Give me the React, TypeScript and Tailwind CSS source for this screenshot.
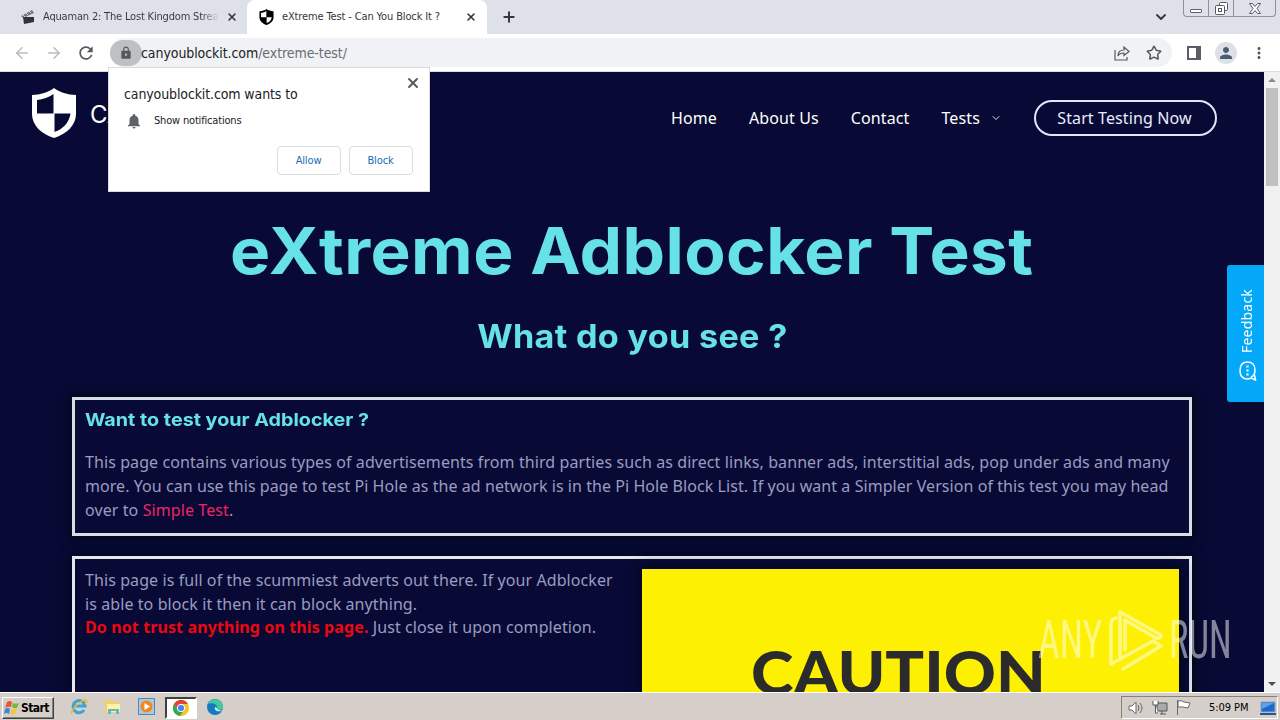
import React from 'react';
import { ArrowLeft, ArrowRight, ChevronDown, Plus, X, Star } from 'lucide-react';
import { MdLock, MdNotifications, MdPerson, MdRefresh, MdMoreVert } from 'react-icons/md';

const navItems = ['Home', 'About Us', 'Contact'];

function ShieldIcon({ className }: { className: string }) {
  return (
    <svg viewBox="0 0 44 50" className={className} fill="currentColor">
      <path
        fillRule="evenodd"
        d="M22 0C17 4 8 7 0 7v19c0 11 9 20 22 24 13-4 22-13 22-24V7C36 7 27 4 22 0ZM21.500 6v19.500H5V12c6-.5 12-3 16.500-6ZM22.500 25.500H38.500C37 35 31 41 22.500 44Z"
      />
    </svg>
  );
}

function TabStrip() {
  return (
    <div className="flex h-[34px] shrink-0 items-stretch bg-[#dee1e9] text-[11px] text-[#34373d]">
      <div className="flex w-[247px] items-center">
        <svg viewBox="0 0 14 14" className="ml-[21px] h-3.5 w-3.5">
          <path d="M0 6 11 0l2 3L2 8Z" fill="#73767a" />
          <path d="M2 7h11v5L3 14Z" fill="#303236" />
          <path d="m2 5 2 2m1-4 2 2m1-4 2 2" stroke="#ddd" />
        </svg>
        <span className="ml-2 w-[176px] overflow-hidden whitespace-nowrap bg-linear-to-r from-[#34373d] from-90% to-transparent bg-clip-text tracking-[-0.18px] text-transparent">
          Aquaman 2: The Lost Kingdom Strea
        </span>
        <X className="ml-[7px] h-3 w-3" strokeWidth={3.2} />
      </div>
      <div className="flex w-[240px] items-center rounded-t-lg bg-white">
        <ShieldIcon className="ml-3 h-4 w-[15px] text-black" />
        <span className="ml-2 w-[180px] whitespace-nowrap tracking-[-0.13px]">eXtreme Test - Can You Block It ?</span>
        <X className="ml-[3px] h-3 w-3" strokeWidth={3.2} />
      </div>
      <Plus className="ml-3.5 h-4 w-4 self-center" strokeWidth={3} />
      <ChevronDown className="ml-auto mr-[14px] h-4 w-4 self-center" strokeWidth={2.800} />
      <div className="mr-1 flex h-[17px] rounded-b-[4px] border border-t-0 border-[#8c929d]">
        <div className="flex w-[25px] items-end justify-center border-r border-[#8c929d] pb-[3px]">
          <div className="h-1 w-3 rounded-[1px] border border-[#5d626b] bg-white" />
        </div>
        <div className="flex w-[25px] items-center justify-center border-r border-[#8c929d]">
          <svg viewBox="0 0 13 13" className="h-[13px] w-[13px]" fill="white" stroke="#555a63">
            <rect x="4.500" y=".5" width="8" height="8" rx="1" />
            <rect x=".5" y="3.500" width="9" height="9" rx="1" />
            <rect x="3.500" y="6.500" width="3" height="3" />
          </svg>
        </div>
        <div className="flex w-[41px] items-center justify-center">
          <svg viewBox="0 0 12 11" className="h-[11px] w-3" fill="white" stroke="#555a63">
            <path d="M.5.5h3L6 3.500 8.500.5h3L8 5.500l3.500 5h-3L6 7.500l-2.500 3h-3L4 5.500Z" />
          </svg>
        </div>
      </div>
    </div>
  );
}

function Toolbar() {
  return (
    <div className="flex h-[38px] shrink-0 items-center border-b border-[#dcdfe2] bg-white text-[#55595d]">
      <ArrowLeft className="ml-[13px] h-[18px] w-[18px] text-[#b9bbbd]" strokeWidth={2} />
      <ArrowRight className="ml-[14px] h-[18px] w-[18px] text-[#b9bbbd]" strokeWidth={2} />
      <MdRefresh className="ml-[13px] h-5 w-5" />
      <div className="ml-[14px] flex h-[29px] w-[1062px] items-center rounded-full bg-[#f0f2f5]">
        <div className="flex h-[26px] w-8 items-center justify-center rounded-full bg-[#bec1c1]">
          <MdLock className="h-3.5 w-3.5" />
        </div>
        <span className="-ml-px mt-px whitespace-nowrap text-[14px] tracking-[-0.08px] text-[#202124]">
          canyoublockit.com<span className="text-[#696d72]">/extreme-test/</span>
        </span>
        <svg viewBox="0 0 16 16" className="ml-auto h-4 w-4" fill="none" stroke="currentColor" strokeWidth="1.200">
          <path d="M1 5v10h12v-3M4 11c0-4 2-6 6-6V2l5 4.500-5 4V8C7 8 5 9 4 11Z" />
        </svg>
        <Star className="ml-4 mr-2.5 h-4 w-4" strokeWidth={2.300} />
      </div>
      <div className="ml-[15px] h-[14px] w-[14px] border-2 border-r-[5px] border-[#5a5d61]" />
      <div className="ml-[14px] flex h-[22px] w-[22px] items-center justify-center rounded-full bg-[#dde1e7]">
        <MdPerson className="h-[18px] w-[18px] text-[#4c5a72]" />
      </div>
      <MdMoreVert className="ml-[13px] h-[18px] w-[18px]" />
    </div>
  );
}

function PermissionPrompt() {
  return (
    <div className="absolute left-[108px] top-[67px] z-20 flex h-[125px] w-[322px] flex-col border border-[#d8dadd] bg-white text-[11px] text-[#202124]">
      <div className="flex justify-between pl-[15px] pr-2 pt-[7px]">
        <span className="mt-[9px] whitespace-nowrap text-[14px] leading-5 tracking-[-0.12px]">canyoublockit.com wants to</span>
        <X className="h-4 w-4 text-[#55595d]" strokeWidth={2.800} />
      </div>
      <div className="mt-[7px] flex h-5 items-center pl-4">
        <MdNotifications className="h-[18px] w-[18px] text-[#5f6368]" />
        <span className="ml-[11px] tracking-[-0.18px]">Show notifications</span>
      </div>
      <div className="mr-4 mt-[15px] flex justify-end gap-2 tracking-[-0.15px] text-[#1a6bb8]">
        <button className="h-[29px] w-16 rounded-[4px] border border-[#dadce0] pr-px pt-0.5">Allow</button>
        <button className="h-[29px] w-16 rounded-[4px] border border-[#dadce0] pr-px pt-0.5">Block</button>
      </div>
    </div>
  );
}

function SiteHeader() {
  return (
    <header className="flex h-[92px] items-center text-[16px] text-white">
      <ShieldIcon className="-mt-2.5 ml-8 h-[50px] w-11" />
      <span className="-mt-1.5 ml-[14px] w-[520px] font-['Inter'] text-[24px] leading-8">CA</span>
      <nav className="ml-[61px] flex items-center gap-8 whitespace-nowrap tracking-[0.11px]">
        {navItems.map((item) => (
          <a key={item}>{item}</a>
        ))}
        <a className="flex items-center">
          Tests <ChevronDown className="ml-2.5 h-3 w-3" strokeWidth={1.700} />
        </a>
        <a className="flex h-9 w-[183px] items-center justify-center rounded-full border-2 border-[#e3e5fa] pr-0.5 text-[#e9ebff]">
          Start Testing Now
        </a>
      </nav>
    </header>
  );
}

function PageBody() {
  return (
    <main className="font-['Noto_Sans',sans-serif]">
      <h1 className="mt-[47px] text-center font-['Inter'] text-[64px] font-bold leading-[80px] text-[#66e1e7]">
        <span className="inline-block scale-x-[1.055] whitespace-nowrap tracking-[0.4px]">eXtreme Adblocker Test</span>
      </h1>
      <h2 className="mt-[26px] text-center font-['Inter'] text-[32px] font-bold leading-10 text-[#66e1e7]">
        <span className="inline-block scale-x-[1.067] whitespace-nowrap tracking-[0.3px]">What do you see ?</span>
      </h2>
      <section className="mx-[72px] mt-10 h-[139px] border-[3px] border-[#d9dce3] px-2.5 pt-[7px] shadow-[0_0_10px_3px_#02091f]">
        <h3 className="font-['Inter'] text-[18px] font-bold leading-[26px] text-[#66e1e7]">
          <span className="inline-block origin-left scale-x-[1.097] whitespace-nowrap">Want to test your Adblocker ?</span>
        </h3>
        <p className="mt-[17px] whitespace-nowrap text-[16px] leading-6 tracking-[0.09px] text-[#9a9cc0]">
          This page contains various types of advertisements from third parties such as direct links, banner ads, interstitial ads, pop under ads and many
          <br />
          <span className="tracking-[0.06px]">
            more. You can use this page to test Pi Hole as the ad network is in the Pi Hole Block List. If you want a Simpler Version of this test you may head
          </span>
          <br />
          over to <a className="text-[#ed2465]">Simple Test</a>.
        </p>
      </section>
      <section className="mx-[72px] mt-5 flex h-[420px] border-[3px] border-[#e5e7ec] pl-2.5 pt-2.5 shadow-[0_0_10px_3px_#02091f]">
        <p className="w-[557px] whitespace-nowrap text-[16px] leading-[23.700px] tracking-[0.085px] text-[#9a9cc0]">
          This page is full of the scummiest adverts out there. If your Adblocker
          <br />
          is able to block it then it can block anything.
          <br />
          <strong className="tracking-[0.11px] text-[#ed0711]">Do not trust anything on this page.</strong> Just close it upon completion.
        </p>
        <div className="h-[400px] w-[537px] bg-[#fdf002] pl-[109px] pt-[71px] shadow-[0_0_10px_3px_#020920]">
          <span className="inline-block origin-left scale-x-[1.055] whitespace-nowrap font-['Lato'] text-[61px] font-black leading-[64px] text-[#2b2b2b]">
            CAUTION
          </span>
        </div>
      </section>
    </main>
  );
}

function FeedbackTab() {
  return (
    <div className="absolute right-4 top-[265px] flex h-[137px] w-[37px] flex-col items-center justify-end gap-2 rounded-l-[3px] bg-[#03a9f8] pb-[21px] text-white">
      <span className="ml-0.5 rotate-180 font-['Noto_Sans'] text-[14px] leading-5 tracking-[0.2px] [writing-mode:vertical-rl]">Feedback</span>
      <svg viewBox="0 0 18 20" className="ml-1 h-5 w-[18px]" fill="none" stroke="white" strokeWidth="1.500">
        <path d="M12 16c3-1 4-4 4-7 0-5-3-8-7.500-8S1 4 1 9.500 4 18 8.500 18c1.500 0 2.500-.5 3.500-1l4.500 2-1-5" />
        <path d="M8.500 4.500v2m0 2v2m0 2v2" strokeWidth="2.200" />
      </svg>
    </div>
  );
}

function Watermark() {
  return (
    <div className="absolute left-[1038px] top-[608px] z-10 flex h-16 w-[194px] items-center justify-between text-white opacity-50">
      <span className="w-[64px] font-['Roboto'] text-[53px] leading-[68px]">
        <span className="inline-block origin-left scale-x-[0.71]">ANY</span>
      </span>
      <svg viewBox="0 0 56 64" className="h-16 w-14" fill="none" stroke="currentColor" strokeWidth="3.600" strokeLinejoin="round" strokeLinecap="round">
        <path d="M8 10Q3 11 3 16V56L45 33L53 38L15 61M12 48V4L53 27Q52 31 48 30L17 12V42" />
      </svg>
      <span className="w-[63px] font-['Roboto'] text-[53px] leading-[68px]">
        <span className="inline-block origin-left scale-x-[0.69]">RUN</span>
      </span>
    </div>
  );
}

function Scrollbar() {
  return (
    <div className="flex w-4 shrink-0 flex-col items-center bg-[#f1f1f1]">
      <div className="mt-1.5 h-0 w-0 border-x-4 border-b-4 border-x-transparent border-b-[#8b8b8b]" />
      <div className="mt-1.5 h-[98px] w-3 bg-[#c1c1c1]" />
      <div className="mb-1.5 mt-auto h-0 w-0 border-x-4 border-t-4 border-x-transparent border-t-[#4d4d4d]" />
    </div>
  );
}

function Taskbar() {
  return (
    <footer className="relative z-20 flex h-7 shrink-0 items-center border-t border-white bg-[#d6cfc9] text-[11px] text-black">
      <button className="ml-0.5 mt-0.5 flex h-[22px] w-[52px] items-center border border-b-[#404040] border-l-white border-r-[#404040] border-t-white font-bold shadow-[inset_-1px_-1px_#85817c]">
        <svg viewBox="0 0 16 16" className="ml-px h-4 w-4">
          <path d="M3 2q3-2 5 0L7 7Q4 6 1 8Z" fill="#e9592c" />
          <path d="M9 3q3 1 6 0l-2 5q-3 1-5-1Z" fill="#79b936" />
          <path d="M1 9q3-2 5 0l-1 5q-3-2-5 0Z" fill="#3c87d3" />
          <path d="M8 9q2 1 5 0l-2 5q-3 1-5-1Z" fill="#f7c52c" />
        </svg>
        <span className="ml-px text-[12px] tracking-[-0.6px]">Start</span>
      </button>
      <svg viewBox="0 0 18 18" className="ml-4 h-[18px] w-[18px]" fill="none">
        <path d="M14 12a6 6 0 1 1 1-4H5" stroke="#38a3dd" strokeWidth="3" />
        <path d="M2 16C-1 13 12 1 16 2q2 1-1 4" stroke="#e7bd36" strokeWidth="1.500" />
      </svg>
      <svg viewBox="0 0 18 18" className="ml-4 h-[18px] w-[18px]">
        <path d="M1 2h6l1 2h7v11H1Z" fill="#efd069" />
        <path d="M3 6h13v8H3Z" fill="#fff0a6" />
        <path d="M4 16v-5h11v5h-3v-3H7v3Z" fill="#65b5d8" />
      </svg>
      <svg viewBox="0 0 17 17" className="ml-4 h-[17px] w-[17px]">
        <path d="M.5.5h16v16H.5Z" fill="#a9cae1" stroke="#5385b1" />
        <circle cx="8.500" cy="8.500" r="6" fill="#f28620" />
        <path d="m6.500 5 5.500 3.500L6.500 12Z" fill="white" />
      </svg>
      <div className="ml-[10px] mt-0.5 flex h-[22px] w-8 items-center justify-center border-2 border-b-white border-l-[#404040] border-r-white border-t-[#404040] bg-white">
        <svg viewBox="0 0 16 16" className="h-4 w-4">
          <circle cx="8" cy="8" r="8" fill="#f9c61d" />
          <path d="M1 4a8 8 0 0 1 14 0H8L5 10Z" fill="#df4334" />
          <path d="M1 4a8 8 0 0 0 6 12l4-6-6 0Z" fill="#35a653" />
          <circle cx="8" cy="8" r="3.700" fill="#4285f4" stroke="white" />
        </svg>
      </div>
      <svg viewBox="0 0 16 16" className="ml-2.5 h-4 w-4">
        <circle cx="8" cy="8" r="8" fill="#1479bf" />
        <path d="M1 5C5-3 16 0 16 8c0 4-6 4-6 1 1-3-4-6-9-4Z" fill="#42ca9c" />
        <path d="M8 8c-1 3 2 5 6 4l1-1c-2 1-5 0-5-2Z" fill="#dcefef" />
      </svg>
      <div className="ml-auto mr-0.5 mt-0.5 flex h-[23px] w-[157px] items-center border border-b-white border-l-[#85817c] border-r-white border-t-[#85817c]">
        <svg viewBox="0 0 16 14" className="ml-1.5 h-3.5 w-4" fill="white" stroke="#68686a">
          <path d="M1 5h3l4-4v12L4 9H1Z" />
          <path d="M10 4q2 3 0 6m2-8q4 5 0 10" fill="none" />
        </svg>
        <svg viewBox="0 0 16 15" className="ml-2 h-[15px] w-4" fill="white" stroke="#55575a">
          <path d="M5 3h10v8H5Z" fill="#aaa" />
          <path d="M1 1v4h5V1M3.500 5v8H6M8 14h6M10 11v3" />
        </svg>
        <svg viewBox="0 0 16 15" className="ml-2 h-[15px] w-4" fill="white" stroke="#68686a">
          <path d="M1.500 0v15M2 1q4-1 6 1l6 1-2 5-5-1H2Z" />
        </svg>
        <span className="ml-[17px] mt-0.5 whitespace-nowrap text-[11px] tracking-[-0.05px]">5:09 PM</span>
        <svg viewBox="0 0 16 14" className="ml-auto mr-px h-3.5 w-4">
          <path d="M1 1h14v10H1Z" fill="#2268ca" stroke="#89a9cd" />
          <path d="M2 2h12L2 8Z" fill="#5da1e8" />
          <path d="M0 12h16v2H0Z" fill="#28568d" />
        </svg>
      </div>
    </footer>
  );
}

export default function App() {
  return (
    <div className="relative flex h-[720px] w-[1280px] flex-col overflow-hidden font-['DejaVu_Sans_Condensed','DejaVu_Sans',sans-serif] [font-stretch:condensed]">
      <TabStrip />
      <Toolbar />
      <div className="flex h-[620px] shrink-0 overflow-hidden">
        <div className="w-[1264px] overflow-hidden bg-[#080a35] font-['Noto_Sans',sans-serif] [font-stretch:normal]">
          <SiteHeader />
          <PageBody />
        </div>
        <Scrollbar />
      </div>
      <Taskbar />
      <PermissionPrompt />
      <FeedbackTab />
      <Watermark />
    </div>
  );
}
